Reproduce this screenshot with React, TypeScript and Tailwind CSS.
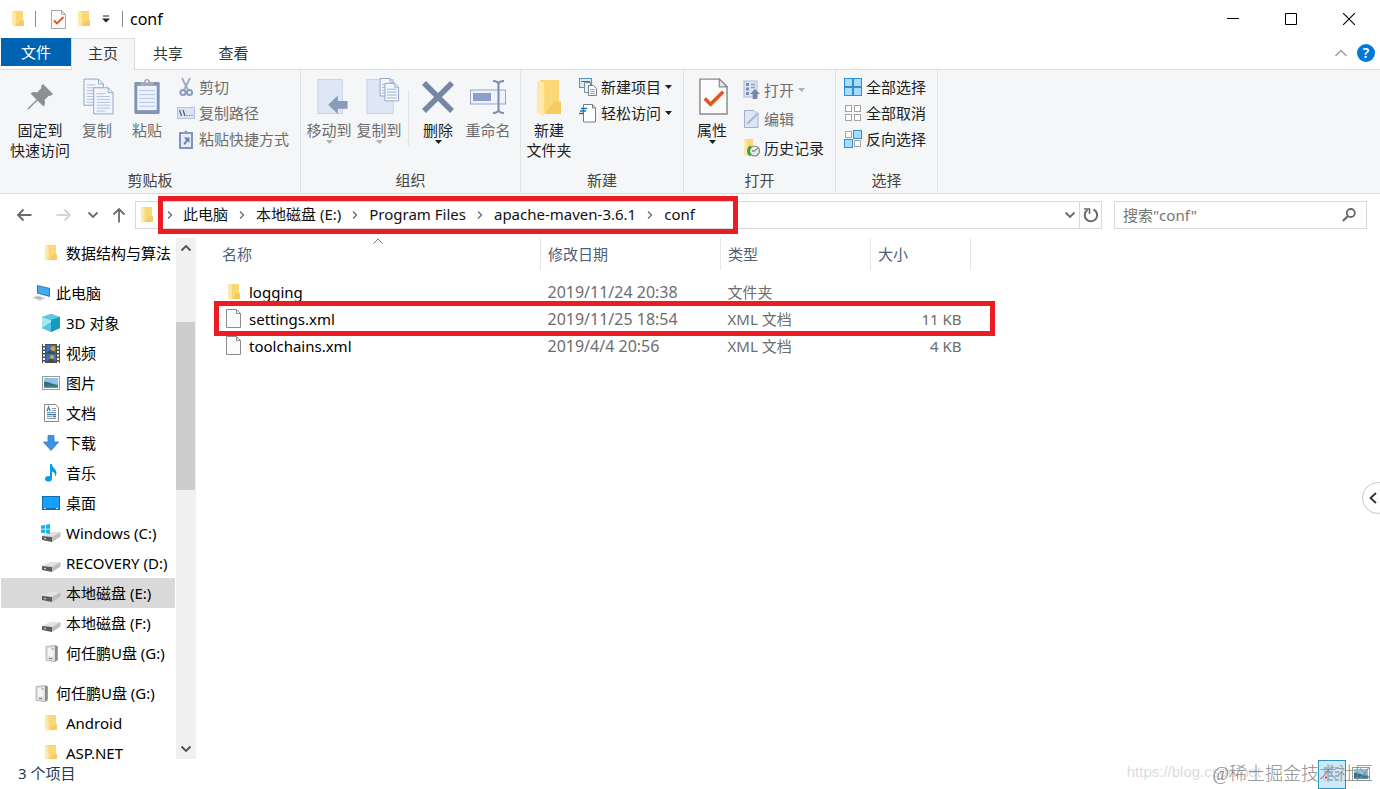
import React from 'react';
import clsx from 'clsx';

type IconProps = { className?: string };

const FolderIcon = ({ className = 'w-3 h-4' }: IconProps) => (
  <svg viewBox="0 0 12 16" preserveAspectRatio="none" className={className}>
    <path d="M1.5 0H11v9.5h1V15H2z" fill="#fbd775" />
    <path d="M8.5 9.5H12V15H4z" fill="#f5cb62" />
    <path d="M0 0.3L3.6 1.2V16L0 14.5z" fill="#fde9a8" />
  </svg>
);

const FileIcon = () => (
  <svg viewBox="0 0 15 19" className="w-[15px] h-[19px]">
    <path d="M.5.5h10l4 4v14H.5z" fill="#fbfbfb" stroke="#8c8c8c" />
    <path d="M10.5.5v4h4" fill="none" stroke="#8c8c8c" />
  </svg>
);

const CheckDocIcon = ({ className = 'w-[15px] h-[19px]' }: IconProps) => (
  <svg viewBox="0 0 30 38" className={className}>
    <path d="M1 1h20l8 8v28H1z" fill="#fbfbfb" stroke="#8a8a8a" strokeWidth="1.5" />
    <path d="M21 1v8h8z" fill="#e6e6e6" stroke="#8a8a8a" strokeWidth="1.2" />
    <path d="M6 21l6 6L25 14" fill="none" stroke="#e0561f" strokeWidth="3.6" />
  </svg>
);

const PinIcon = () => (
  <svg viewBox="0 0 26 26" className="w-[26px] h-[26px]">
    <path d="M16 0L26 10L23.5 12L22 11.5L17.5 16C18.5 19 18 21 16.5 22.5L10.5 16.5L2 25L0 26L1 24L9.500 15.500L3.500 9.500C5 8 7.500 7.500 10 8.500L14.500 4L14 2z" fill="#8d9093" />
  </svg>
);

const CopyIcon = () => (
  <svg viewBox="0 0 32 38" className="w-[31px] h-[37px] ml-0.5">
    {[[1, 1], [11, 10]].map(([x, y]) => (
      <g key={x} transform={`translate(${x} ${y})`}>
        <path d="M0 0h15l5 5v22H0z" fill="#f1f5fc" stroke="#94a4c6" />
        <path d="M15 0v5h5" fill="none" stroke="#94a4c6" />
        <path d="M3 6h9M3 9h14M3 12h14M3 15h14M3 18h14M3 21h14M3 24h9" stroke="#b3c1de" />
      </g>
    ))}
  </svg>
);

const PasteIcon = () => (
  <svg viewBox="0 0 28 38" className="w-7 h-[37px]">
    <rect x="1" y="4" width="26" height="33" rx="1.5" fill="#8193b8" />
    <rect x="4" y="8" width="20" height="25" fill="#edf2fb" />
    <path d="M6 13h16M6 17h16M6 21h16M6 25h16M6 29h16" stroke="#b5c4e4" />
    <path d="M7 8V4h4a3 3 0 0 1 6 0h4v4z" fill="#a2a9b6" />
    <circle cx="14" cy="3.500" r="1.200" fill="#f5f6f7" />
  </svg>
);

const CutIcon = () => (
  <svg viewBox="0 0 18 20" className="w-[18px] h-5">
    <path d="M5 1l6 12M13 1L7 13" stroke="#9fa9bd" strokeWidth="1.800" fill="none" />
    <circle cx="6" cy="15.500" r="2.600" fill="none" stroke="#8c9bbd" strokeWidth="2" />
    <circle cx="12.500" cy="15.500" r="2.600" fill="none" stroke="#8c9bbd" strokeWidth="2" />
  </svg>
);

const CopyPathIcon = () => (
  <svg viewBox="0 0 18 12" className="w-[18px] h-3">
    <rect x=".5" y=".5" width="17" height="11" fill="#d9e4f5" stroke="#b4c4e0" />
    <path d="M2.500 3l2 6M6 3l2 6" stroke="#5b6880" strokeWidth="1.300" />
    <path d="M9.500 8.500h1M12 8.500h1M14.500 8.500h1" stroke="#5b6880" strokeWidth="1.200" />
  </svg>
);

const PasteLinkIcon = () => (
  <svg viewBox="0 0 18 19" className="w-[18px] h-[19px]">
    <rect x="3" y="3" width="12" height="15" fill="#e6edf9" stroke="#8193b8" strokeWidth="2" />
    <path d="M6 4V2h1.500a1.500 1.500 0 0 1 3 0H12v2z" fill="#8f9ab0" />
    <path d="M7 7.500h5.500V13l-1.800-1.800L8 15l-1.500-1.500 2.500-3.500z" fill="#6f82a8" />
  </svg>
);

const MoveToIcon = () => (
  <svg viewBox="0 0 34 38" className="w-[34px] h-[37px] ml-2">
    <rect x="1.500" y="1.500" width="25" height="35" fill="#dde7f6" stroke="#c3d2ec" />
    <path d="M12 27.500L22 18v5.500h10v8H22V37z" fill="#8b9bbb" />
  </svg>
);

const CopyToIcon = () => (
  <svg viewBox="0 0 34 38" className="w-[34px] h-[37px] ml-2">
    <rect x=".5" y="1.500" width="27" height="35" fill="#dde7f6" stroke="#c3d2ec" />
    {[[14, 0.5], [19, 5.5]].map(([x, y]) => (
      <g key={x} transform={`translate(${x} ${y})`}>
        <path d="M0 0h10l4 4v14H0z" fill="#f4f7fc" stroke="#94a4c6" />
        <path d="M10 0v4h4M2 6h10M2 9h10M2 12h10M2 15h10" fill="none" stroke="#9fb0d2" />
      </g>
    ))}
  </svg>
);

const DeleteIcon = () => (
  <svg viewBox="0 0 32 32" className="w-8 h-8">
    <path d="M2 2l28 28M30 2L2 30" stroke="#7886a5" strokeWidth="5.500" />
  </svg>
);

const RenameIcon = () => (
  <svg viewBox="0 0 36 34" className="w-9 h-[34px]">
    <rect x=".5" y="10" width="35" height="14" fill="#edf2fb" stroke="#94a8d0" />
    <rect x="3" y="13" width="18" height="8" fill="#8b9fc8" />
    <path d="M23 1c3 0 5 1 5.500 3C29 2 31 1 34 1M28.500 4v26M23 33c3 0 5-1 5.500-3c.5 2 2.500 3 5.500 3" fill="none" stroke="#7c8cad" strokeWidth="2" />
  </svg>
);

const NewItemIcon = () => (
  <svg viewBox="0 0 18 18" className="w-[18px] h-[18px]">
    <rect x=".5" y=".5" width="12" height="9" fill="#d6eaf7" stroke="#5d8fb0" />
    <path d="M2 3.500h9" stroke="#2f7fb0" />
    <path d="M5.500 4.500h6v10h-6z" fill="#e9f2f8" stroke="#7a8c99" />
    <path d="M9.500 7.500h5l3 3v7h-8z" fill="#fff" stroke="#7d7d7d" />
    <path d="M11 11.500h5M11 13.500h5M11 15.500h5" stroke="#a5a5a5" />
  </svg>
);

const EasyAccessIcon = () => (
  <svg viewBox="0 0 18 19" className="w-[18px] h-[19px]">
    <path d="M4.500.5h9l3 3.500v14H4.500z" fill="#fff" stroke="#7d7d7d" />
    <path d="M13.500.5V4h3" fill="none" stroke="#7d7d7d" />
    <path d="M2 4.500h6M1 7h6M0 9.500h5" stroke="#1f76b3" strokeWidth="1.300" />
  </svg>
);

const OpenIcon = () => (
  <svg viewBox="0 0 18 20" className="w-[18px] h-5">
    <rect x="2" y="1" width="13" height="16" fill="#dbe4f3" stroke="#aebcd8" />
    <path d="M4 3h3v3H4zM4 7.500h3v3H4zM4 12h3v3H4z" fill="#7c8fb5" />
    <path d="M9 4.500h4M9 7.500h4" stroke="#8fa0c4" strokeWidth="1.500" />
    <path d="M13 9l5 5h-2.700v5h-4.600v-5H8z" fill="#7587a9" />
  </svg>
);

const EditIcon = () => (
  <svg viewBox="0 0 18 18" className="w-[18px] h-[18px]">
    <path d="M2.500.5h9.500l4 4v13H2.500z" fill="#dde6f5" stroke="#9fb0d0" />
    <path d="M4 15l1-3L15.500 2l2 2L7 14z" fill="#aab8d4" stroke="#e9eff9" strokeWidth=".6" />
  </svg>
);

const HistoryIcon = () => (
  <svg viewBox="0 0 18 18" className="w-[18px] h-[18px]">
    <path d="M2 0h9v16H2z" fill="#fbd775" />
    <path d="M2 0l3 1v16l-3-1z" fill="#fde9a8" />
    <circle cx="12.500" cy="12" r="5" fill="#e5ebe5" stroke="#7f8a7f" strokeWidth="1.200" />
    <path d="M12.500 12l3-2.500M12.500 12H10" stroke="#4b5b4b" />
    <path d="M9 7.500C5.500 9.500 5.500 14 8.500 16.500" fill="none" stroke="#37a23d" strokeWidth="2.500" />
  </svg>
);

const SelectIcon = ({ filled }: { filled: boolean[] }) => (
  <svg viewBox="0 0 18 18" className="w-[18px] h-[18px]">
    {filled.map((on, i) => {
      const size = on ? 8 : 6;
      const pad = on ? 0.5 : 1.5;
      return (
        <rect
          key={i}
          x={(i % 2) * 9 + pad}
          y={Math.floor(i / 2) * 9 + pad}
          width={size}
          height={size}
          fill={on ? '#a9dcfa' : '#fff'}
          stroke={on ? '#2f8fd3' : '#a3a3a3'}
        />
      );
    })}
  </svg>
);

const Caret = ({ className }: IconProps) => (
  <svg viewBox="0 0 7 4" className={clsx('w-[7px] h-1 shrink-0', className)}>
    <path d="M0 0h7L3.500 4z" fill="currentColor" />
  </svg>
);

const Chevron = ({ d, className, thin }: { d: string; className?: string; thin?: boolean }) => (
  <svg viewBox="0 0 12 12" className={clsx('w-3 h-3', className)}>
    <path d={d} fill="none" stroke="currentColor" strokeWidth={thin ? 1.3 : 1.8} />
  </svg>
);

const UP = 'M1.500 8.500L6 4l4.500 4.500';
const WIDE_UP = 'M.5 9L6 3.500L11.500 9';
const DOWN = 'M1.500 3.500L6 8l4.500-4.500';
const RIGHT = 'M4 2.500L7.500 6L4 9.500';
const LEFT = 'M9 1L3.500 6L9 11';

const ComputerIcon = () => (
  <svg viewBox="0 0 18 16" className="w-[18px] h-4">
    <path d="M5 0l13 3v9L5 8.500z" fill="#2e7cb5" />
    <path d="M6 1.200l11 2.600v6.800L6 7.700z" fill="#43aaf0" />
    <path d="M0 12.500l6-2 8 2.500-6 3z" fill="#d4d8db" />
    <path d="M2 12.500l4-1 5 1.500-3.500 1.500z" fill="#b2b7bb" />
  </svg>
);

const CubeIcon = () => (
  <svg viewBox="0 0 18 18" className="w-[18px] h-[18px]">
    <path d="M9 0l9 3v11l-9 4-9-4V3z" fill="#25b1cf" />
    <path d="M0 3l9 3v12l-9-4z" fill="#a6e8f2" />
    <path d="M0 3l9-3 9 3-9 3z" fill="#5cc9de" />
    <path d="M0 14l9-6v10z" fill="#55c6db" />
    <path d="M9 6l9-3v11l-9 4z" fill="#159bc0" />
  </svg>
);

const VideoIcon = () => (
  <svg viewBox="0 0 18 19" className="w-[18px] h-[19px]">
    <rect width="18" height="19" fill="#4b4b4b" />
    <path d="M2 0v19M16 0v19" stroke="#fff" strokeWidth="2" strokeDasharray="2 1.500" />
    <rect x="4" y="1" width="10" height="8" fill="#3a6fc4" />
    <rect x="4" y="10" width="10" height="8" fill="#3a6fc4" />
    <circle cx="11" cy="4.500" r="2.500" fill="#c4a23a" />
    <path d="M4 9l4-3 6 3zM4 18l5-4 5 4z" fill="#47502c" />
    <circle cx="10" cy="13" r="2" fill="#d3ab3c" />
  </svg>
);

const PictureIcon = () => (
  <svg viewBox="0 0 18 14" className="w-[18px] h-3.5">
    <rect x=".5" y=".5" width="17" height="13" fill="#fff" stroke="#9a9a9a" />
    <rect x="2" y="2" width="14" height="10" fill="#8cc3ee" />
    <path d="M2 6c4-1 6 2 14 3v3H2z" fill="#3f6f6a" />
    <path d="M2 10.500h14V12H2z" fill="#4a93c4" />
  </svg>
);

const DocumentIcon = () => (
  <svg viewBox="0 0 15 18" className="w-[15px] h-[18px]">
    <path d="M.5.5h11l3 3v14H.5z" fill="#fff" stroke="#8a8a8a" />
    <path d="M8 4.500h4M8 6.500h4M3 8.500h9M3 14.500h9M3 12.500h5" stroke="#8a9aa8" />
    <path d="M3 7l1.500-4L6 7M3 10.500h9M9 12.500h3" fill="none" stroke="#2b83c6" strokeWidth="1.300" />
  </svg>
);

const DownloadIcon = () => (
  <svg viewBox="0 0 16 16" className="w-4 h-4">
    <path d="M5 .5h6v6.500h4.500L8 15.500.5 7H5z" fill="#3d94e6" stroke="#2c78c4" strokeWidth=".8" />
  </svg>
);

const MusicIcon = () => (
  <svg viewBox="0 0 12 18" className="w-3 h-[18px]">
    <ellipse cx="3.500" cy="14.800" rx="3.500" ry="2.800" fill="#0c9be6" />
    <path d="M5 0h2c0 4 5 5 4.500 9.500-.2 1.500-.8 2.300-1.500 3C10.500 9 8.500 8 7 7.500V15H5z" fill="#0c9be6" />
  </svg>
);

const DesktopIcon = () => (
  <svg viewBox="0 0 18 14" className="w-[18px] h-3.5">
    <rect x=".5" y=".5" width="17" height="13" fill="#19a0fa" stroke="#0c6cb4" />
    <path d="M1 12.500h16" stroke="#0a75c4" />
    <path d="M2 12.500h1.500M14 12.500h2" stroke="#fff" />
  </svg>
);

const DriveIcon = ({ windows }: { windows?: boolean }) => (
  <svg viewBox="0 0 20 20" className="w-5 h-5">
    <path d="M1 13l8-4h10.500L11 14z" fill="#e2e2e2" />
    <path d="M11 14l8.500-5v4.500L11 19z" fill="#bdbdbd" />
    <path d="M1 13l10 1v5L1 17z" fill="#5c5c5c" />
    <path d="M3 15.500l2 .3" stroke="#c4f0b2" />
    {windows && <path d="M0 2.500l4-.6v3.800H0zM4.800 1.800L9 1v4.700H4.800zM0 6.500h4v3.700l-4-.5zM4.800 6.500H9V11l-4.200-.7z" fill="#18b2ef" />}
  </svg>
);

const UsbIcon = () => (
  <svg viewBox="0 0 13 17" className="w-[13px] h-[17px]">
    <path d="M1 1.500L10 .5l2.500 1V15L10 16.500l-9-1z" fill="#dedede" stroke="#a9a9a9" strokeWidth=".8" />
    <path d="M10 .5l2.500 1V15L10 16.500z" fill="#8b8b8b" />
    <path d="M3 3h5.500v8.500H3z" fill="#f5f5f5" />
    <path d="M6.500 4h2M4 13.500h3" stroke="#777" />
  </svg>
);

interface BigButtonProps {
  icon: React.ReactNode;
  lines: string[];
  disabled?: boolean;
  caret?: boolean;
  className?: string;
}

const BigButton: React.FC<BigButtonProps> = ({ icon, lines, disabled, caret, className = 'w-[50px]' }) => (
  <button
    className={clsx('flex flex-col items-center shrink-0 pt-2 whitespace-nowrap', className, disabled ? 'text-[#6d6d6d]' : 'text-[#1e1e1e]')}
  >
    <span className="flex h-[42px] items-start justify-center">{icon}</span>
    {lines.map((line) => (
      <span key={line} className="leading-5">{line}</span>
    ))}
    {caret && <Caret className={disabled ? 'text-[#b0b0b0]' : ''} />}
  </button>
);

interface SmallButtonProps {
  icon: React.ReactNode;
  label: string;
  disabled?: boolean;
  caret?: boolean;
  tall?: boolean;
}

const SmallButton: React.FC<SmallButtonProps> = ({ icon, label, disabled, caret, tall }) => (
  <button
    className={clsx('flex items-center whitespace-nowrap', tall ? 'h-[29px]' : 'h-[26px]', disabled ? 'text-[#6d6d6d]' : 'text-[#1e1e1e]')}
  >
    <span className="flex w-[18px] justify-center mr-1">{icon}</span>
    {label}
    {caret && <Caret className={clsx('ml-1', disabled && 'text-[#b0b0b0]')} />}
  </button>
);

interface RibbonGroupProps {
  title: string;
  className: string;
  wide?: boolean;
  children: React.ReactNode;
}

const RibbonGroup: React.FC<RibbonGroupProps> = ({ title, className, wide, children }) => (
  <section className={clsx('flex flex-col shrink-0 border-r border-[#e2e3e4] mb-px', className)}>
    <div className={clsx('flex items-start h-[100px]', wide ? 'pl-2' : 'pl-[3px]')}>{children}</div>
    <h2 className="text-center leading-5 text-[#444]">{title}</h2>
  </section>
);

interface NavItem {
  label: string;
  icon: React.ReactNode;
  root?: boolean;
  selected?: boolean;
}

const navSections: NavItem[][] = [
  [{ label: '数据结构与算法', icon: <FolderIcon /> }],
  [
    { label: '此电脑', icon: <ComputerIcon />, root: true },
    { label: '3D 对象', icon: <CubeIcon /> },
    { label: '视频', icon: <VideoIcon /> },
    { label: '图片', icon: <PictureIcon /> },
    { label: '文档', icon: <DocumentIcon /> },
    { label: '下载', icon: <DownloadIcon /> },
    { label: '音乐', icon: <MusicIcon /> },
    { label: '桌面', icon: <DesktopIcon /> },
    { label: 'Windows (C:)', icon: <DriveIcon windows /> },
    { label: 'RECOVERY (D:)', icon: <DriveIcon /> },
    { label: '本地磁盘 (E:)', icon: <DriveIcon />, selected: true },
    { label: '本地磁盘 (F:)', icon: <DriveIcon /> },
    { label: '何任鹏U盘 (G:)', icon: <UsbIcon /> },
  ],
  [
    { label: '何任鹏U盘 (G:)', icon: <UsbIcon />, root: true },
    { label: 'Android', icon: <FolderIcon /> },
    { label: 'ASP.NET', icon: <FolderIcon /> },
  ],
];

const files = [
  { name: 'logging', date: '2019/11/24 20:38', type: '文件夹', size: '', folder: true },
  { name: 'settings.xml', date: '2019/11/25 18:54', type: 'XML 文档', size: '11 KB', marked: true },
  { name: 'toolchains.xml', date: '2019/4/4 20:56', type: 'XML 文档', size: '4 KB' },
];

const crumbs = ['此电脑', '本地磁盘 (E:)', 'Program Files', 'apache-maven-3.6.1', 'conf'];

const TitleBar = () => (
  <header className="flex items-center h-[38px] shrink-0 pl-3 pr-0.5">
    <FolderIcon />
    <span className="w-px h-4 bg-[#8a8a8a] ml-[11px] mr-[15px]" />
    <button aria-label="属性"><CheckDocIcon /></button>
    <button aria-label="新建文件夹" className="ml-3"><FolderIcon /></button>
    <button aria-label="自定义快速访问工具栏" className="ml-3">
      <svg viewBox="0 0 8 8" className="w-2 h-2">
        <path d="M1 1h6" stroke="#222" />
        <path d="M0 3.500h8L4 7.500z" fill="#222" />
      </svg>
    </button>
    <span className="w-px h-4 bg-[#8a8a8a] ml-3 mr-[7px]" />
    <h1 className="text-base text-black">conf</h1>
    <div className="flex ml-auto h-full">
      <button aria-label="最小化" className="flex w-[58px] items-center justify-center">
        <svg viewBox="0 0 12 12" className="w-3 h-3"><path d="M0 5.500h12" stroke="#000" /></svg>
      </button>
      <button aria-label="最大化" className="flex w-[58px] items-center justify-center">
        <svg viewBox="0 0 12 12" className="w-3 h-3"><path d="M.5.5h11v11H.5z" fill="none" stroke="#000" /></svg>
      </button>
      <button aria-label="关闭" className="flex w-[58px] items-center justify-center">
        <svg viewBox="0 0 12 12" className="w-3 h-3"><path d="M0 0l12 12M12 0L0 12" stroke="#000" strokeWidth="1.100" /></svg>
      </button>
    </div>
  </header>
);

const Tabs = () => (
  <nav className="flex h-8 shrink-0 pl-px text-[#333]">
    <button className="w-[70px] h-7 bg-[#0063b1] text-white">文件</button>
    <button className="relative z-10 w-16 pb-1 bg-[#f5f6f7] border border-b-0 border-[#dadbdc]">主页</button>
    <button className="w-[66px] pb-0.5">共享</button>
    <button className="w-[65px] pb-0.5">查看</button>
    <div className="flex items-center ml-auto gap-2.5 pb-0.5 pr-[5px]">
      <button aria-label="折叠功能区">
        <Chevron d={WIDE_UP} thin className="text-[#9a9a9a]" />
      </button>
      <button aria-label="帮助" className="flex w-[18px] h-[18px] items-center justify-center rounded-full bg-[#0078d7] text-sm font-semibold text-white">
        ?
      </button>
    </div>
  </nav>
);

const Ribbon = () => (
  <div className="flex h-[125px] shrink-0 -mt-px bg-[#f5f6f7] border-y border-[#dadbdc]">
    <RibbonGroup title="剪贴板" className="w-[301px]" wide>
      <BigButton icon={<span className="mt-1.5"><PinIcon /></span>} lines={['固定到', '快速访问']} className="w-16" />
      <BigButton icon={<CopyIcon />} lines={['复制']} disabled />
      <BigButton icon={<PasteIcon />} lines={['粘贴']} disabled />
      <div className="flex flex-col pt-1 pl-[5px]">
        <SmallButton icon={<CutIcon />} label="剪切" disabled />
        <SmallButton icon={<CopyPathIcon />} label="复制路径" disabled />
        <SmallButton icon={<PasteLinkIcon />} label="粘贴快捷方式" disabled />
      </div>
    </RibbonGroup>
    <RibbonGroup title="组织" className="w-[220px]">
      <BigButton icon={<MoveToIcon />} lines={['移动到']} disabled caret />
      <BigButton icon={<CopyToIcon />} lines={['复制到']} disabled caret />
      <span className="w-px h-14 mt-5 mx-1 bg-[#e2e3e4]" />
      <BigButton icon={<span className="mt-[3px]"><DeleteIcon /></span>} lines={['删除']} caret />
      <BigButton icon={<span className="mt-0.5"><RenameIcon /></span>} lines={['重命名']} disabled />
    </RibbonGroup>
    <RibbonGroup title="新建" className="w-[163px]">
      <BigButton icon={<span className="mt-0.5"><FolderIcon className="w-6 h-9" /></span>} lines={['新建', '文件夹']} />
      <div className="flex flex-col pt-1 pl-[5px]">
        <SmallButton icon={<NewItemIcon />} label="新建项目" caret />
        <SmallButton icon={<EasyAccessIcon />} label="轻松访问" caret />
      </div>
    </RibbonGroup>
    <RibbonGroup title="打开" className="w-[152px]">
      <BigButton icon={<CheckDocIcon className="w-[29px] h-[37px] ml-0.5" />} lines={['属性']} caret />
      <div className="flex flex-col pt-[5px] pl-[5px]">
        <SmallButton icon={<OpenIcon />} label="打开" disabled caret tall />
        <SmallButton icon={<EditIcon />} label="编辑" disabled tall />
        <SmallButton icon={<HistoryIcon />} label="历史记录" tall />
      </div>
    </RibbonGroup>
    <RibbonGroup title="选择" className="w-[102px]" wide>
      <div className="flex flex-col pt-1">
        <SmallButton icon={<SelectIcon filled={[true, true, true, true]} />} label="全部选择" />
        <SmallButton icon={<SelectIcon filled={[false, false, false, false]} />} label="全部取消" />
        <SmallButton icon={<SelectIcon filled={[false, true, true, false]} />} label="反向选择" />
      </div>
    </RibbonGroup>
  </div>
);

const ArrowIcon = ({ className }: IconProps) => (
  <svg viewBox="0 0 16 16" className={clsx('w-4 h-4', className)}>
    <path d="M15.500 8H2M7.500 2.500L2 8l5.500 5.500" fill="none" stroke="currentColor" strokeWidth="1.800" />
  </svg>
);

const AddressBar = () => (
  <div className="flex items-center h-[42px] shrink-0 pl-4 pr-[13px] text-[#6a6a6a]">
    <button aria-label="后退"><ArrowIcon /></button>
    <button aria-label="前进" className="ml-6 text-[#d4d4d4]"><ArrowIcon className="rotate-180" /></button>
    <button aria-label="最近浏览的位置" className="ml-[15px]"><Chevron d={DOWN} /></button>
    <button aria-label="上移" className="ml-3"><ArrowIcon className="rotate-90" /></button>
    <div className="flex flex-1 items-center h-7 ml-2 border border-[#d9d9d9]">
      <span className="w-[21px] pl-[5px]"><FolderIcon /></span>
      <div className="relative flex items-center">
        {crumbs.map((crumb, i) => (
          <React.Fragment key={crumb}>
            <span className={clsx('flex justify-center', i === 0 ? 'w-[26px]' : 'w-7')}>
              <Chevron d={RIGHT} thin />
            </span>
            <a href="#" className="pb-0.5 text-[#111] whitespace-nowrap">{crumb}</a>
          </React.Fragment>
        ))}
        <span className="absolute left-px -right-[43px] -inset-y-2 border-[5px] border-[#ec1c24]" />
      </div>
      <button aria-label="以前的位置" className="ml-auto mr-[3px]"><Chevron d={DOWN} /></button>
      <button aria-label="刷新" className="flex w-[22px] h-full items-center justify-center border-l border-[#d9d9d9]">
        <svg viewBox="0 0 16 16" className="w-4 h-4">
          <path d="M4.500 3A6.200 6.200 0 1 0 10.500 2.500" fill="none" stroke="currentColor" strokeWidth="2" />
          <path d="M1 2h5.500v5" fill="none" stroke="currentColor" strokeWidth="1.600" />
        </svg>
      </button>
    </div>
    <label className="flex items-center w-[253px] h-7 ml-3 pl-2 pr-2.5 border border-[#d9d9d9]">
      <input aria-label="搜索" placeholder={'搜索"conf"'} className="flex-1 min-w-0 outline-none placeholder:text-[#757575]" />
      <svg viewBox="0 0 14 14" className="w-3.5 h-3.5">
        <circle cx="8.800" cy="5" r="4" fill="none" stroke="currentColor" strokeWidth="1.800" />
        <path d="M6 8L.8 13" stroke="currentColor" strokeWidth="2.200" />
      </svg>
    </label>
  </div>
);

const Sidebar = () => (
  <aside className="flex w-[196px] shrink-0">
    <nav className="flex-1 min-w-0 overflow-hidden px-px">
      {navSections.map((section, i) => (
        <ul key={i} className="mb-2.5">
          {section.map((item) => (
            <li key={item.label}>
              <a
                href="#"
                className={clsx('flex items-center h-[30px] text-black whitespace-nowrap', item.root ? 'pl-[30px]' : 'pl-10', item.selected && 'bg-[#d9d9d9]')}
              >
                <span className="flex w-5 justify-center mr-[5px]">{item.icon}</span>
                {item.label}
              </a>
            </li>
          ))}
        </ul>
      ))}
    </nav>
    <div className="flex flex-col w-5 bg-[#f0f0f0] text-[#505050]">
      <button aria-label="向上滚动" className="flex h-5 shrink-0 items-center justify-center"><Chevron d={UP} /></button>
      <div className="flex-[64]" />
      <div className="flex-[168] bg-[#cdcdcd] mr-px" />
      <div className="flex-[249]" />
      <button aria-label="向下滚动" className="flex h-5 shrink-0 items-center justify-center"><Chevron d={DOWN} /></button>
    </div>
  </aside>
);

const FileList = () => (
  <main className="flex-1 min-w-0 pl-[19px]">
    <table className="table-fixed w-[756px] text-left">
      <colgroup>
        <col />
        <col className="w-[180px]" />
        <col className="w-[150px]" />
        <col className="w-[100px]" />
      </colgroup>
      <thead className="text-[#4c607a]">
        <tr className="h-8">
          <th className="relative font-normal pl-[7px] border-r border-[#e5e5e5]">
            名称
            <svg viewBox="0 0 10 6" className="absolute top-0 left-1/2 -translate-x-1/2 w-2.5 h-1.5">
              <path d="M.5 5.500L5 1l4.500 4.500" fill="none" stroke="#777" />
            </svg>
          </th>
          <th className="font-normal pl-[7px] border-r border-[#e5e5e5]">修改日期</th>
          <th className="font-normal pl-[7px] border-r border-[#e5e5e5]">类型</th>
          <th className="font-normal pl-[7px] border-r border-[#e5e5e5]">大小</th>
        </tr>
      </thead>
      <tbody className="text-[#6d6d6d] before:block before:h-2">
        {files.map((file) => (
          <tr key={file.name} className="relative h-[27px]">
            <td className="pl-[11px]">
              <span className="flex items-center text-black">
                <span className="flex w-[15px] justify-center mr-2">{file.folder ? <FolderIcon /> : <FileIcon />}</span>
                {file.name}
              </span>
              {file.marked && <span className="absolute -left-px -right-6 -inset-y-1 border-[5px] border-[#ec1c24]" />}
            </td>
            <td className="pl-[7px] text-base leading-5">{file.date}</td>
            <td className="pl-[7px]">{file.type}</td>
            <td className="pr-[9px] text-right">{file.size}</td>
          </tr>
        ))}
      </tbody>
    </table>
  </main>
);

const StatusBar = () => (
  <footer className="relative flex items-center h-[30px] shrink-0 pl-[18px] pr-2.5 text-[#1e395b]">
    <span className="pb-0.5">3 个项目</span>
    <div className="flex items-center ml-auto gap-1.5">
      <button aria-label="详细信息" className="flex w-7 h-[29px] items-center justify-center bg-[#cde8f6] border border-[#2d96bf]">
        <svg viewBox="0 0 18 16" className="w-[18px] h-4">
          <path d="M1 2h3M6 2h4M12 2h4M1 6h3M6 6h4M12 6h4M6 10h4M12 10h4M6 14h4M12 14h4" stroke="#6a7f90" />
          <rect x="1" y="9" width="4" height="5" fill="#fff" stroke="#999" strokeWidth=".6" />
          <rect x="2" y="10.500" width="2" height="2" fill="#cc3333" />
        </svg>
      </button>
      <button aria-label="大缩略图"><PictureIcon /></button>
    </div>
    <div className="absolute right-[7px] bottom-0.5 flex items-center h-[26px] whitespace-nowrap">
      <span className="absolute right-[112px] pb-1 text-[#dcdcdc] font-['Liberation_Sans']">https://blog.csdn.net</span>
      <span className="relative text-lg font-light text-[#8c8c8c] font-['Liberation_Serif','Noto_Sans_CJK_SC',serif]">@稀土掘金技术社区</span>
    </div>
  </footer>
);

export default function App() {
  return (
    <div className="relative flex flex-col h-screen overflow-hidden bg-white text-[15px] leading-5 font-['Noto_Sans','Noto_Sans_CJK_SC',sans-serif]">
      <TitleBar />
      <Tabs />
      <Ribbon />
      <AddressBar />
      <div className="flex flex-1 min-h-0 pt-0.5">
        <Sidebar />
        <FileList />
      </div>
      <StatusBar />
      <button
        aria-label="展开侧栏"
        className="absolute -right-3.5 top-[482px] flex w-8 h-8 items-center rounded-full border border-[#c8c8c8] bg-white pl-1 text-[#333]"
      >
        <Chevron d={LEFT} />
      </button>
    </div>
  );
}
